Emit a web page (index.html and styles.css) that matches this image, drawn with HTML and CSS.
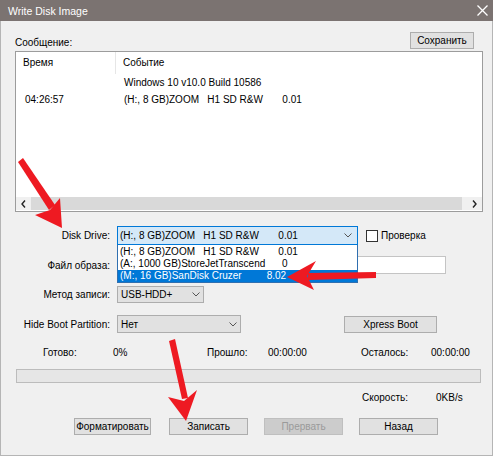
FILE: index.html
```html
<!DOCTYPE html>
<html lang="ru">
<head>
    <meta charset="UTF-8">
    <meta name="viewport" content="width=device-width, initial-scale=1.0">
    <title>Write Disk Image</title>
    <link rel="stylesheet" href="styles.css">
</head>
<body>

    <div id="window">
        <div id="titlebar">
            <span id="title">Write Disk Image</span>
            <svg id="close" width="11" height="11" viewBox="0 0 11 11">
                <path d="M0.5 0.5 L10.5 10.5 M10.5 0.5 L0.5 10.5" stroke="#fff" stroke-width="1.3" fill="none"/>
            </svg>
        </div>

        <div id="content">
            <div class="msg-head">
                <span>Сообщение:</span>
                <button class="btn" id="save">Сохранить</button>
            </div>

            <div id="log">
                <div class="log-head">
                    <div class="col-time">Время</div>
                    <div class="col-event">Событие</div>
                </div>
                <div class="log-body">
                    <div class="col-time"><br>04:26:57</div>
                    <div class="col-event">Windows 10 v10.0 Build 10586<br><span class="pre">(H:, 8 GB)ZOOM   H1 SD R&amp;W       0.01</span></div>
                </div>
                <div class="hscroll">
                    <div class="sb-arrow">
                        <svg width="5" height="8" viewBox="0 0 5 8"><polyline points="4,0.5 1,4 4,7.5" stroke="#222" stroke-width="1.4" fill="none"/></svg>
                    </div>
                    <div class="sb-thumb"></div>
                    <div class="sb-arrow">
                        <svg width="5" height="8" viewBox="0 0 5 8"><polyline points="1,0.5 4,4 1,7.5" stroke="#222" stroke-width="1.4" fill="none"/></svg>
                    </div>
                </div>
            </div>

            <div class="field" id="row-drive">
                <label>Disk Drive:</label>
                <div class="ctl">
                    <div class="combo focused" id="drive">
                        <span class="pre">(H:, 8 GB)ZOOM   H1 SD R&amp;W       0.01</span>
                        <svg class="chev" width="8" height="5" viewBox="0 0 8 5"><polyline points="0.5,0.5 4,4 7.5,0.5" stroke="#555" stroke-width="1" fill="none"/></svg>
                        <div id="drive-list">
                            <div class="opt pre">(H:, 8 GB)ZOOM   H1 SD R&amp;W       0.01</div>
                            <div class="opt pre">(A:, 1000 GB)StoreJetTranscend      0</div>
                            <div class="opt pre selected">(M:, 16 GB)SanDisk Cruzer         8.02</div>
                        </div>
                    </div>
                    <span class="check"></span>
                    <span>Проверка</span>
                </div>
            </div>

            <div class="field" id="row-file">
                <label>Файл образа:</label>
                <div class="ctl">
                    <div class="textbox"></div>
                </div>
            </div>

            <div class="field" id="row-method">
                <label>Метод записи:</label>
                <div class="ctl">
                    <div class="combo" id="method">
                        <span>USB-HDD+</span>
                        <svg class="chev" width="8" height="5" viewBox="0 0 8 5"><polyline points="0.5,0.5 4,4 7.5,0.5" stroke="#555" stroke-width="1" fill="none"/></svg>
                    </div>
                </div>
            </div>

            <div class="field" id="row-hide">
                <label>Hide Boot Partition:</label>
                <div class="ctl">
                    <div class="combo" id="hide">
                        <span>Нет</span>
                        <svg class="chev" width="8" height="5" viewBox="0 0 8 5"><polyline points="0.5,0.5 4,4 7.5,0.5" stroke="#555" stroke-width="1" fill="none"/></svg>
                    </div>
                    <button class="btn" id="xpress">Xpress Boot</button>
                </div>
            </div>

            <div class="stats" id="status">
                <span>Готово:</span>
                <span>0%</span>
                <span>Прошло:</span>
                <span>00:00:00</span>
                <span>Осталось:</span>
                <span>00:00:00</span>
            </div>

            <div id="progress"></div>

            <div class="stats" id="speed">
                <span class="speed-label">Скорость:</span>
                <span class="speed-val">0KB/s</span>
            </div>

            <div class="actions">
                <button class="btn" id="format">Форматировать</button>
                <button class="btn">Записать</button>
                <button class="btn" disabled>Прервать</button>
                <button class="btn">Назад</button>
            </div>
        </div>

        <!-- red hint arrows drawn over the dialog -->
        <svg id="arrows" width="495" height="458" viewBox="0 0 495 458">
            <g fill="#ee1a22">
                <polygon points="18,162 23,158 55,205 49,210"/>
                <polygon points="62,228 35,215 50,210 60,198"/>
                <polygon points="376,272 376,278 308,280 308,273"/>
                <polygon points="287,277 316,261 307,276 314,290"/>
                <polygon points="169,341 175,339 188,398 182,399"/>
                <polygon points="186,421 168,397 184,401 197,390"/>
            </g>
        </svg>
    </div>

</body>
</html>
```

FILE: styles.css
```css
body {
    margin: 0;
    background-color: #fff;
    font-family: "Liberation Sans", Arial, sans-serif;
    font-size: 10px;
    color: #000;
}

#window {
    position: relative;
    width: 493px;
    height: 458px;
}

#titlebar {
    height: 21px;
    background-color: #7b7371;
    display: flex;
    justify-content: space-between;
    align-items: center;
    padding: 0 5px 0 8px;
    box-sizing: border-box;
}

#title {
    color: #fff;
    font-size: 10.5px;
}

#content {
    background-color: #f0f0f0;
    border: 1px solid #b5b5b5;
    border-top: none;
    padding: 11px 9px 20px 14px;
}

.pre {
    white-space: pre;
}

.btn {
    font-family: "Liberation Sans", Arial, sans-serif;
    font-size: 10px;
    color: #000;
    background-color: #e1e1e1;
    border: 1px solid #adadad;
    height: 17px;
    padding: 0;
    box-sizing: border-box;
}

.btn:disabled {
    background-color: #cccccc;
    border-color: #bfbfbf;
    color: #9a9a9a;
}

.msg-head {
    display: flex;
    justify-content: space-between;
    align-items: flex-end;
    line-height: 12px;
}

#save {
    width: 64px;
    margin-right: 9px;
}

/* log list */
#log {
    margin-top: 2px;
    height: 161px;
    box-sizing: border-box;
    background-color: #fff;
    border: 1px solid #9c9c9c;
    display: flex;
    flex-direction: column;
}

.log-head, .log-body {
    display: grid;
    grid-template-columns: 100px auto;
}

.log-head {
    line-height: 22px;
}

.log-head .col-time {
    padding-left: 7px;
    border-right: 1px solid #e6e6e6;
}

.log-head .col-event {
    padding-left: 7px;
}

.log-body {
    flex: 1;
    line-height: 17px;
}

.log-body .col-time {
    padding-left: 9px;
}

.log-body .col-event {
    padding-left: 8px;
}

.hscroll {
    height: 13px;
    margin-bottom: 1px;
    display: flex;
    background-color: #f0f0f0;
}

.sb-arrow {
    width: 15px;
    display: flex;
    align-items: center;
    justify-content: center;
}

.sb-thumb {
    flex: 1;
    background-color: #d9d9d9;
    margin-right: 5px;
}

/* form rows */
.field {
    display: grid;
    grid-template-columns: 95px auto;
    column-gap: 7px;
    align-items: center;
}

.field label {
    text-align: right;
}

.ctl {
    display: flex;
    align-items: center;
}

#row-drive {
    margin-top: 14px;
}

#row-file {
    margin-top: 11px;
}

#row-method {
    margin-top: 12px;
}

#row-hide {
    margin-top: 12px;
}

.combo {
    position: relative;
    height: 18px;
    box-sizing: border-box;
    background-color: #e1e1e1;
    border: 1px solid #adadad;
    display: flex;
    justify-content: space-between;
    align-items: center;
    padding: 0 3px 0 3px;
}

.combo.focused {
    height: 19px;
    background-color: #d4e8f8;
    border-color: #0078d7;
    padding: 0 5px 0 2px;
}

#drive {
    width: 241px;
}

#method {
    width: 87px;
    height: 17px;
}

#hide {
    width: 124px;
}

#drive-list {
    position: absolute;
    top: calc(100% + 1px);
    left: -1px;
    width: 241px;
    box-sizing: border-box;
    background-color: #fff;
    border: 1px solid #2f6fb0;
    border-top: none;
    padding-top: 1px;
    z-index: 2;
}

.opt {
    line-height: 12px;
    padding-left: 2px;
}

.opt.selected {
    background-color: #0078d7;
    color: #fff;
}

.check {
    width: 12px;
    height: 12px;
    box-sizing: border-box;
    border: 1px solid #333;
    background-color: #fff;
    margin: 0 3px 0 8px;
}

.textbox {
    width: 329px;
    height: 18px;
    box-sizing: border-box;
    background-color: #fff;
    border: 1px solid #c4c4c4;
}

#xpress {
    width: 93px;
    margin-left: 103px;
}

/* status */
.stats {
    display: grid;
    grid-template-columns: 70px 94px 61px 93px 70px auto;
    padding-left: 28px;
    line-height: 14px;
}

#status {
    margin-top: 13px;
}

#progress {
    margin: 9px 0 0 1px;
    width: 465px;
    height: 14px;
    box-sizing: border-box;
    background-color: #e6e6e6;
    border: 1px solid #bcbcbc;
}

#speed {
    margin-top: 8px;
}

.speed-label {
    grid-column: 5;
    padding-left: 1px;
}

.speed-val {
    grid-column: 6;
    padding-left: 5px;
}

.actions {
    display: flex;
    gap: 16px;
    padding-left: 59px;
    margin-top: 13px;
}

.actions .btn {
    width: 79px;
}

.actions #format {
    width: 77px;
    margin-right: 2px;
}

#arrows {
    position: absolute;
    top: 0;
    left: 0;
    pointer-events: none;
    z-index: 5;
}
```
